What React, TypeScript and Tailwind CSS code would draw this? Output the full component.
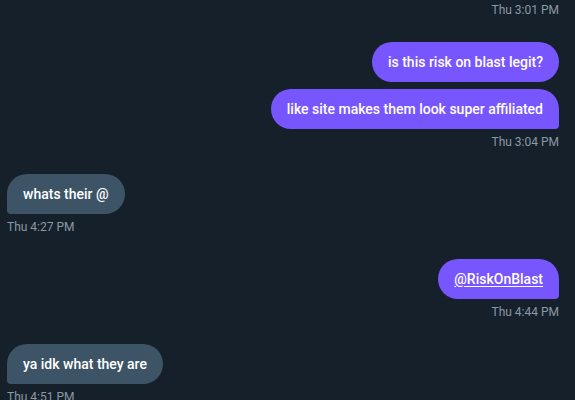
import React from "react";

type Msg = { text: string; link?: boolean };
type Group = { side: "left" | "right"; messages: Msg[]; time: string };

const groups: Group[] = [
  { side: "right", messages: [{ text: "is this risk on blast legit?" }, { text: "like site makes them look super affiliated" }], time: "Thu 3:04 PM" },
  { side: "left", messages: [{ text: "whats their @" }], time: "Thu 4:27 PM" },
  { side: "right", messages: [{ text: "@RiskOnBlast", link: true }], time: "Thu 4:44 PM" },
  { side: "left", messages: [{ text: "ya idk what they are" }], time: "Thu 4:51 PM" },
];

function Bubble({ msg, side, last }: { msg: Msg; side: "left" | "right"; last: boolean }) {
  const base = "px-4 py-[10px] text-[14px] leading-5 font-medium text-white rounded-[20px]";
  const color = side === "right" ? "bg-[#7856ff]" : "bg-[#3d5466]";
  const corner = last ? (side === "right" ? "rounded-br-[4px]" : "rounded-bl-[4px]") : "";
  return (
    <div className={`${base} ${color} ${corner}`}>
      {msg.link ? <span className="underline underline-offset-2">{msg.text}</span> : msg.text}
    </div>
  );
}

export default function App() {
  return (
    <div
      className="h-[400px] w-[575px] overflow-hidden bg-[#15202b] pl-[7px] pr-4"
      style={{ fontFamily: 'Roboto, sans-serif' }}
    >
      <div className="flex justify-end pt-[2px] text-[12px] leading-4 text-[#8b98a5]">Thu 3:01 PM</div>
      {groups.map((g, i) => (
        <div key={i} className={`mt-6 flex flex-col ${g.side === "right" ? "items-end" : "items-start"}`}>
          <div className={`flex flex-col gap-[7px] ${g.side === "right" ? "items-end" : "items-start"}`}>
            {g.messages.map((m, j) => (
              <Bubble key={j} msg={m} side={g.side} last={j === g.messages.length - 1} />
            ))}
          </div>
          <div className="mt-[5px] text-[12px] leading-4 text-[#8b98a5]">{g.time}</div>
        </div>
      ))}
    </div>
  );
}
